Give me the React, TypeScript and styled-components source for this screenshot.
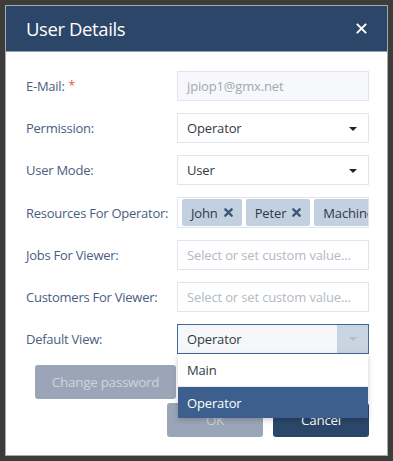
import React from "react";
import styled, { createGlobalStyle } from "styled-components";

const Global = createGlobalStyle`
  html, body { margin: 0; padding: 0; background: #3c3c3c; }
  body { font-family: "Open Sans", "Noto Sans", sans-serif; }
  * { box-sizing: border-box; }
`;

const Page = styled.div`
  width: 393px;
  height: 461px;
  padding: 5px 5px 5px 5px;
  background: #3c3c3c;
`;

const Modal = styled.div`
  width: 383px;
  height: 451px;
  background: #ffffff;
  border: 1px solid #a9a9a9;
  display: flex;
  flex-direction: column;
`;

const Header = styled.div`
  height: 46px;
  background: #2b4669;
  display: flex;
  align-items: center;
  justify-content: space-between;
  padding: 0 19px 0 20px;
  border-bottom: 1px solid #8d9db2;
`;

const Title = styled.h1`
  margin: 0;
  font-size: 18.5px;
  font-weight: 400;
  color: #ffffff;
  letter-spacing: -0.4px;
`;

const Close = styled.span`
  color: #ffffff;
  display: flex;
`;

const Body = styled.div`
  padding: 19px 18px 0 20px;
  display: flex;
  flex-direction: column;
`;

const Form = styled.div`
  display: grid;
  grid-template-columns: 151px 192px;
  row-gap: 12px;
  align-items: center;
`;

const Label = styled.label`
  font-size: 13px;
  letter-spacing: -0.25px;
  color: #4a5d82;
`;

const Req = styled.span`
  color: #e0575b;
  font-size: 12px;
  margin-left: 4px;
  vertical-align: top;
`;

const Field = styled.div<{ $disabled?: boolean; $focused?: boolean }>`
  position: relative;
  height: 30px;
  border: 1px solid ${(p) => (p.$focused ? "#4068a0" : "#dfe6ef")};
  background: ${(p) => (p.$disabled ? "#f6f8fb" : p.$focused ? "#f5f7fa" : "#ffffff")};
  display: flex;
  align-items: center;
  padding-left: 9px;
  font-size: 13px;
  letter-spacing: -0.15px;
  color: ${(p) => (p.$disabled ? "#a3a9b1" : "#333a44")};
`;

const Placeholder = styled.span`
  color: #b2bac4;
`;

const Caret = styled.span`
  position: absolute;
  right: 11px;
  top: 13px;
  width: 0;
  height: 0;
  border-left: 4px solid transparent;
  border-right: 4px solid transparent;
  border-top: 4px solid #222;
`;

const ArrowBox = styled.span`
  position: absolute;
  right: 0;
  top: 0;
  bottom: 0;
  width: 31px;
  background: #c9d4e1;
  display: flex;
  align-items: center;
  justify-content: center;
  &::after {
    content: "";
    border-left: 4px solid transparent;
    border-right: 4px solid transparent;
    border-top: 4px solid #adbfd4;
  }
`;

const TagBox = styled.div`
  height: 31px;
  border: 1px solid #dfe6ef;
  display: flex;
  align-items: center;
  gap: 4px;
  padding: 0 0 0 4px;
  overflow: hidden;
  white-space: nowrap;
`;

const Tag = styled.span`
  flex: none;
  height: 27px;
  background: #c3d0df;
  border-radius: 2px;
  display: flex;
  align-items: center;
  gap: 6px;
  padding: 0 9px;
  font-size: 13px;
  letter-spacing: -0.15px;
  color: #2f3a48;
`;

const Menu = styled.div`
  position: absolute;
  left: 0;
  right: 0;
  top: 29px;
  background: #ffffff;
  box-shadow: 0 2px 6px rgba(0, 0, 0, 0.2);
  z-index: 2;
`;

const Item = styled.div<{ $active?: boolean }>`
  height: 32px;
  display: flex;
  align-items: center;
  padding-left: 9px;
  font-size: 13px;
  background: ${(p) => (p.$active ? "#3d5f8e" : "#ffffff")};
  color: ${(p) => (p.$active ? "#ffffff" : "#333a44")};
  border-top: ${(p) => (p.$active ? "1px solid #e6ebf1" : "none")};
`;

const Button = styled.button<{ $primary?: boolean }>`
  height: 34px;
  border: none;
  border-radius: 3px;
  font-family: inherit;
  font-size: 13.5px;
  letter-spacing: -0.3px;
  background: ${(p) => (p.$primary ? "#2a4669" : "#9aa6b7")};
  color: ${(p) => (p.$primary ? "#ffffff" : "#cdd4de")};
  padding: 0;
`;

const PwRow = styled.div`
  margin-top: 11px;
  padding-left: 9px;
  display: flex;
`;

const PwButton = styled(Button)`
  width: 141px;
`;

const Footer = styled.div`
  margin-top: 4px;
  display: flex;
  justify-content: flex-end;
  gap: 10px;
`;

const ActionButton = styled(Button)`
  width: 96px;
`;

const X = () => (
  <svg width="9" height="9" viewBox="0 0 10 10">
    <path d="M1.5 1.5 L8.5 8.5 M8.5 1.5 L1.5 8.5" stroke="#3d5578" strokeWidth="2.6" strokeLinecap="round" />
  </svg>
);

export default function App() {
  return (
    <Page>
      <Global />
      <Modal>
        <Header>
          <Title>User Details</Title>
          <Close>
            <svg width="13" height="13" viewBox="0 0 14 14">
              <path d="M2 2 L12 12 M12 2 L2 12" stroke="#ffffff" strokeWidth="2.2" />
            </svg>
          </Close>
        </Header>
        <Body>
          <Form>
            <Label>
              E-Mail:<Req>*</Req>
            </Label>
            <Field $disabled>jpiop1@gmx.net</Field>

            <Label>Permission:</Label>
            <Field>
              Operator
              <Caret />
            </Field>

            <Label>User Mode:</Label>
            <Field>
              User
              <Caret />
            </Field>

            <Label>Resources For Operator:</Label>
            <TagBox>
              <Tag>
                John <X />
              </Tag>
              <Tag>
                Peter <X />
              </Tag>
              <Tag>Machine</Tag>
            </TagBox>

            <Label>Jobs For Viewer:</Label>
            <Field>
              <Placeholder>Select or set custom value...</Placeholder>
            </Field>

            <Label>Customers For Viewer:</Label>
            <Field>
              <Placeholder>Select or set custom value...</Placeholder>
            </Field>

            <Label>Default View:</Label>
            <Field $focused>
              Operator
              <ArrowBox />
              <Menu>
                <Item>Main</Item>
                <Item $active>Operator</Item>
              </Menu>
            </Field>
          </Form>
          <PwRow>
            <PwButton>Change password</PwButton>
          </PwRow>
          <Footer>
            <ActionButton>OK</ActionButton>
            <ActionButton $primary>Cancel</ActionButton>
          </Footer>
        </Body>
      </Modal>
    </Page>
  );
}
